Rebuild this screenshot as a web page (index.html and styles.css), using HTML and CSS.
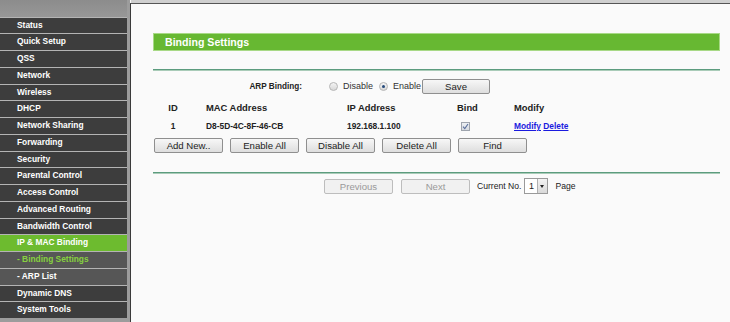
FILE: index.html
```html
<!DOCTYPE html>
<html>
  <head>
    <link rel="stylesheet" href="styles.css">
  </head>
  <body>
    <div class="frame">
      <nav class="menu">
        <div class="menu-top"></div>
        <a class="item">Status</a>
        <a class="item">Quick Setup</a>
        <a class="item">QSS</a>
        <a class="item">Network</a>
        <a class="item">Wireless</a>
        <a class="item">DHCP</a>
        <a class="item">Network Sharing</a>
        <a class="item">Forwarding</a>
        <a class="item">Security</a>
        <a class="item">Parental Control</a>
        <a class="item">Access Control</a>
        <a class="item">Advanced Routing</a>
        <a class="item">Bandwidth Control</a>
        <a class="item active">IP &amp; MAC Binding</a>
        <a class="item sub current">- Binding Settings</a>
        <a class="item sub">- ARP List</a>
        <a class="item">Dynamic DNS</a>
        <a class="item">System Tools</a>
      </nav>

      <main class="main">
        <div class="content">
          <h1 class="title">Binding Settings</h1>
          <div class="rule"></div>

          <div class="arp-row">
            <span class="arp-label">ARP Binding:</span>
            <label class="radio"><span class="dot"></span>Disable</label>
            <label class="radio last"><span class="dot on"></span>Enable</label>
            <button type="button" class="btn save">Save</button>
          </div>

          <div class="grid head">
            <span class="c-id">ID</span>
            <span class="c-mac">MAC Address</span>
            <span class="c-ip">IP Address</span>
            <span class="c-bind">Bind</span>
            <span class="c-mod">Modify</span>
          </div>
          <div class="grid data">
            <span class="c-id">1</span>
            <span class="c-mac">D8-5D-4C-8F-46-CB</span>
            <span class="c-ip">192.168.1.100</span>
            <span class="c-bind">
              <span class="check">
                <svg width="7" height="7" viewBox="0 0 7 7"><path d="M1 3.6 L2.8 5.6 L6 1" fill="none" stroke="#5a6f9c" stroke-width="1.1"/></svg>
              </span>
            </span>
            <span class="c-mod"><a class="link">Modify</a> <a class="link">Delete</a></span>
          </div>

          <div class="actions">
            <button type="button" class="btn">Add New..</button>
            <button type="button" class="btn">Enable All</button>
            <button type="button" class="btn">Disable All</button>
            <button type="button" class="btn">Delete All</button>
            <button type="button" class="btn">Find</button>
          </div>

          <div class="rule low"></div>

          <div class="pager">
            <button type="button" class="btn off">Previous</button>
            <button type="button" class="btn off">Next</button>
            <span class="pager-text">Current No.</span>
            <span class="select"><span class="select-val">1</span><span class="select-arrow"></span></span>
            <span class="pager-text pager-page">Page</span>
          </div>
        </div>
      </main>
    </div>
  </body>
</html>
```

FILE: styles.css
```css
body {
  margin: 0;
  font-family: "Liberation Sans", Arial, sans-serif;
  background: #fafafa;
  overflow: hidden;
}

.frame {
  display: flex;
  height: 322px;
}

/* left menu */
.menu {
  width: 127px;
  padding-right: 3px;
  background: #9c9c9c;
  flex-shrink: 0;
  overflow: hidden;
}

.menu-top {
  height: 16.5px;
  background: linear-gradient(#8c8c8c, #979797);
}

.item {
  display: block;
  height: 15.75px;
  line-height: 15.75px;
  border-top: 1px solid #b4b4b4;
  background: #3d3d3d;
  color: #fff;
  font-size: 8.4px;
  font-weight: bold;
  padding-left: 17px;
  white-space: nowrap;
}

.item.active {
  background: #6dbb2f;
}

.item.sub {
  background: #565656;
}

.item.current {
  color: #86d13f;
}

/* main area */
.main {
  flex: 1;
  border-left: 1px solid #3a3a3a;
  border-top: 1px solid #555;
  margin-top: 3px;
  background: #fafafa;
  position: relative;
}

.main::before {
  content: "";
  position: absolute;
  left: 0;
  right: 0;
  top: -4px;
  height: 3px;
  background: #cfcfcf;
}

.content {
  margin-left: 22px;
  width: 567px;
  padding-top: 29px;
}

.title {
  margin: 0;
  height: 16px;
  line-height: 16px;
  border: 1px solid #a8d986;
  background: #67b832;
  color: #fff;
  font-size: 10.6px;
  font-weight: bold;
  padding-left: 11px;
}

.rule {
  margin-top: 18px;
  height: 1px;
  border-bottom: 1px solid #a9cbb8;
  background: #5c9c7e;
}

.rule.low {
  margin-top: 19px;
}

.arp-row {
  display: flex;
  align-items: center;
  height: 14px;
  margin-top: 8px;
  font-size: 8.6px;
  color: #222;
}

.arp-label {
  width: 149px;
  text-align: right;
  font-weight: bold;
  font-size: 8.2px;
  margin-right: 27px;
}

.radio {
  display: flex;
  align-items: center;
  gap: 5px;
  margin-right: 6px;
  font-size: 9px;
  color: #333;
}

.radio.last {
  margin-right: 1px;
}

.dot {
  width: 7px;
  height: 7px;
  border-radius: 50%;
  border: 1px solid #b5b5b5;
  background: linear-gradient(#f4f4f4, #d8d8d8);
  position: relative;
}

.dot.on::after {
  content: "";
  position: absolute;
  left: 2px;
  top: 2px;
  width: 3px;
  height: 3px;
  border-radius: 50%;
  background: #24497a;
}

.btn {
  width: 69px;
  height: 15px;
  padding: 0;
  border: 1px solid #8f8f8f;
  border-radius: 2px;
  background: linear-gradient(#f7f7f7, #dedede);
  font-family: "Liberation Sans", Arial, sans-serif;
  font-size: 9.6px;
  color: #222;
  line-height: 13px;
}

.btn.save {
  width: 68px;
}

.btn.off {
  color: #9a9a9a;
  border-color: #bdbdbd;
  background: #f1f1f1;
}

/* binding table */
.grid {
  display: grid;
  grid-template-columns: 40px 154px 110px 57px 1fr;
  align-items: center;
  color: #222;
  font-weight: bold;
}

.grid.head {
  height: 16px;
  margin-top: 6px;
  font-size: 9.4px;
}

.grid.data {
  height: 16px;
  margin-top: 3px;
  font-size: 8.4px;
}

.c-id {
  text-align: center;
}

.c-mac {
  padding-left: 13px;
}

.c-bind {
  display: flex;
}

.check {
  margin-left: 4px;
  width: 7px;
  height: 7px;
  border: 1px solid #9ea4ad;
  background: linear-gradient(#eceff3, #d7dbe0);
  display: flex;
  align-items: center;
  justify-content: center;
}

.link {
  color: #1a1adf;
  text-decoration: underline;
  font-size: 8.4px;
}

.actions {
  display: flex;
  gap: 7px;
  margin-top: 4px;
  padding-left: 1px;
}

.pager {
  display: flex;
  align-items: center;
  height: 16px;
  margin-top: 4px;
  padding-left: 171px;
  font-size: 8.6px;
  color: #222;
}

.pager .btn + .btn {
  margin-left: 8px;
}

.pager-text {
  margin-left: 7px;
}

.pager-page {
  margin-left: 7px;
}

.select {
  display: flex;
  margin-left: 3px;
  width: 22px;
  height: 14px;
  border: 1px solid #9a9a9a;
  background: #fff;
}

.select-val {
  flex: 1;
  text-align: center;
  line-height: 14px;
  font-size: 9px;
}

.select-arrow {
  width: 9px;
  border-left: 1px solid #b0b0b0;
  background: linear-gradient(#f3f3f3, #d9d9d9);
  position: relative;
}

.select-arrow::after {
  content: "";
  position: absolute;
  left: 2px;
  top: 6px;
  border-left: 2.5px solid transparent;
  border-right: 2.5px solid transparent;
  border-top: 3px solid #222;
}
```
